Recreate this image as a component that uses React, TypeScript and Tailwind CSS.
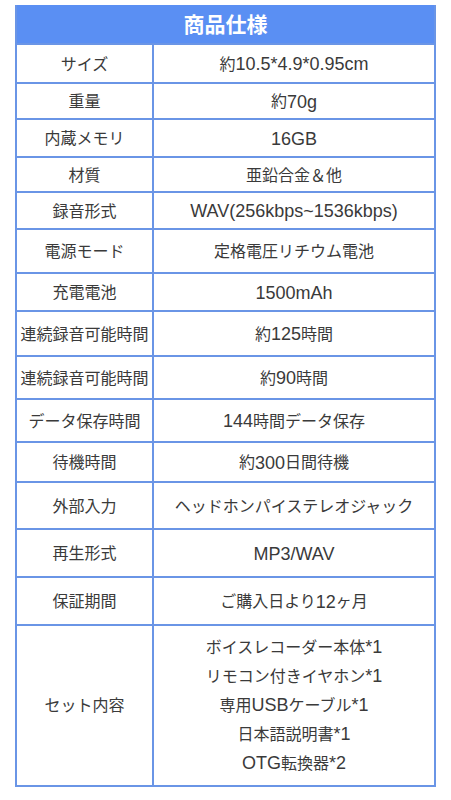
const rows: { label: string; value: string; h: number }[] = [
  { label: "サイズ", value: "約10.5*4.9*0.95cm", h: 39 },
  { label: "重量", value: "約70g", h: 36 },
  { label: "内蔵メモリ", value: "16GB", h: 38 },
  { label: "材質", value: "亜鉛合金＆他", h: 35 },
  { label: "録音形式", value: "WAV(256kbps~1536kbps)", h: 37 },
  { label: "電源モード", value: "定格電圧リチウム電池", h: 44 },
  { label: "充電電池", value: "1500mAh", h: 38 },
  { label: "連続録音可能時間", value: "約125時間", h: 45 },
  { label: "連続録音可能時間", value: "約90時間", h: 43 },
  { label: "データ保存時間", value: "144時間データ保存", h: 43 },
  { label: "待機時間", value: "約300日間待機", h: 40 },
  { label: "外部入力", value: "ヘッドホンパイステレオジャック", h: 47 },
  { label: "再生形式", value: "MP3/WAV", h: 48 },
  { label: "保証期間", value: "ご購入日より12ヶ月", h: 48 },
];

const setItems = [
  "ボイスレコーダー本体*1",
  "リモコン付きイヤホン*1",
  "専用USBケーブル*1",
  "日本語説明書*1",
  "OTG転換器*2",
];

// latin runs render a bit larger, like the reference's mixed font
function Mixed({ text }: { text: string }) {
  const parts = text.match(/[\x20-\x7e]+|[^\x20-\x7e]+/g) ?? [];
  return (
    <>
      {parts.map((p, i) =>
        /^[\x20-\x7e]+$/.test(p) ? (
          <span key={i} className="text-[18px]">
            {p}
          </span>
        ) : (
          <span key={i}>{p}</span>
        )
      )}
    </>
  );
}

export default function App() {
  return (
    <div
      className="min-h-[800px] bg-white pt-[5px]"
      style={{ fontFamily: '"Liberation Sans", "Noto Sans CJK JP", sans-serif' }}
    >
      <div className="ml-[15px] w-[421px] border-2 border-t-0 border-[#6a95e6] text-[16px] text-[#3a3a3a]">
        <div
          className="flex h-[38px] items-center justify-center bg-[#5a8ff3] text-[21px] font-bold text-white"
          style={{ fontFamily: '"Noto Sans CJK JP", sans-serif' }}
        >
          商品仕様
        </div>
        {rows.map((r, i) => (
          <div
            key={i}
            className="flex border-t-2 border-[#6a95e6] pt-[2px]"
            style={{ height: r.h }}
          >
            <div className="-mt-[2px] flex w-[137px] items-center justify-center whitespace-nowrap border-r-2 border-[#6a95e6] pt-[2px]">
              {r.label}
            </div>
            <div className="flex flex-1 items-center justify-center whitespace-nowrap">
              <Mixed text={r.value} />
            </div>
          </div>
        ))}
        <div className="flex h-[161px] border-t-2 border-[#6a95e6]">
          <div className="flex w-[137px] items-center justify-center border-r-2 border-[#6a95e6]">
            セット内容
          </div>
          <div className="flex flex-1 flex-col items-center justify-center leading-[28px]">
            {setItems.map((s) => (
              <div key={s}>
                <Mixed text={s} />
              </div>
            ))}
          </div>
        </div>
      </div>
    </div>
  );
}
